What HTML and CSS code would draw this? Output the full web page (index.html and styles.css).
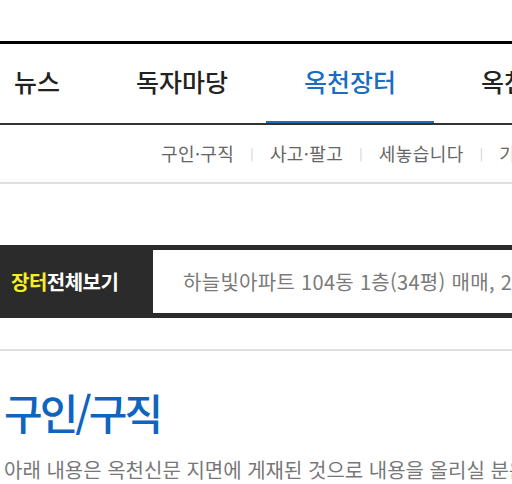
FILE: index.html
```html
<!DOCTYPE html>
<html lang="ko">
  <head>
    <meta charset="UTF-8" />
    <meta name="viewport" content="width=device-width, initial-scale=1.0" />
    <title>옥천장터 - 구인/구직</title>
    <link rel="stylesheet" href="styles.css">
  </head>
  <body>
    <div class="top-space"></div>
    <nav class="gnb">
      <ul class="gnb-list">
        <li class="gnb-item">뉴스</li>
        <li class="gnb-item">독자마당</li>
        <li class="gnb-item active">옥천장터</li>
        <li class="gnb-item">옥천사람</li>
      </ul>
    </nav>
    <div class="sub-menu">
      <a class="sub-link">구인·구직</a>
      <span class="sub-sep">|</span>
      <a class="sub-link">사고·팔고</a>
      <span class="sub-sep">|</span>
      <a class="sub-link">세놓습니다</a>
      <span class="sub-sep">|</span>
      <a class="sub-link">기타</a>
    </div>

    <div class="market-bar">
      <div class="market-label"><em>장터</em>전체보기</div>
      <div class="market-ticker">하늘빛아파트 104동 1층(34평) 매매, 200세대 신축 아파트</div>
    </div>

    <div class="content">
      <h2 class="page-title">구인/구직</h2>
      <p class="page-desc">아래 내용은 옥천신문 지면에 게재된 것으로 내용을 올리실 분은 신문사로 연락주세요.</p>
    </div>
  </body>
</html>
```

FILE: styles.css
```css
* {
  padding: 0;
  margin: 0;
  box-sizing: border-box;
}

body {
  font-family: "Noto Sans CJK KR", "Noto Sans", sans-serif;
  background-color: #fff;
  color: #222;
  overflow: hidden;
}

/*HEADER*/
.top-space {
  height: 41px;
}

.gnb {
  border-top: 3px solid #000;
  border-bottom: 2px solid #333;
  overflow: hidden;
  white-space: nowrap;
}

.gnb-list {
  display: flex;
  list-style: none;
  margin-left: -24px;
}

.gnb-item {
  flex: none;
  padding: 0 38px;
  height: 79px;
  line-height: 74px;
  font-size: 25px;
  font-weight: 500;
  color: #222;
}

.gnb-item.active {
  color: #1a6dc2;
  height: 81px;
  margin-bottom: -2px;
  border-bottom: 4px solid #1a6dc2;
}

.gnb-item.active + .gnb-item {
  padding-left: 47px;
}

.sub-menu {
  display: flex;
  align-items: center;
  height: 59px;
  padding-left: 161px;
  padding-bottom: 2px;
  border-bottom: 2px solid #e0e0e0;
  white-space: nowrap;
  overflow: hidden;
  font-size: 18px;
  letter-spacing: 0.4px;
  color: #666;
}

.sub-link {
  flex: none;
}

.sub-sep {
  flex: none;
  margin: 0 16px;
  font-size: 12px;
  color: #ccc;
}

/*MARKET BAR*/
.market-bar {
  display: flex;
  margin-top: 61px;
  height: 73px;
  padding: 5px 0 5px 0;
  background-color: #2b2b2b;
}

.market-label {
  flex: none;
  width: 153px;
  padding-left: 11px;
  display: flex;
  align-items: center;
  font-size: 20px;
  font-weight: 700;
  letter-spacing: -0.5px;
  color: #fff;
}

.market-label em {
  font-style: normal;
  color: #f5f01e;
}

.market-ticker {
  flex: 1;
  min-width: 0;
  display: flex;
  align-items: center;
  padding-left: 30px;
  background-color: #fff;
  white-space: nowrap;
  overflow: hidden;
  font-size: 20px;
  letter-spacing: 0.3px;
  color: #7a7a7a;
}

/*CONTENT*/
.content {
  margin-top: 31px;
  border-top: 2px solid #e0e0e0;
  padding-left: 4px;
  white-space: nowrap;
  overflow: hidden;
}

.page-title {
  margin-top: 33px;
  font-size: 42px;
  line-height: 56px;
  font-weight: 500;
  letter-spacing: -3px;
  color: #0f64c0;
}

.page-desc {
  margin-top: 15px;
  font-size: 20px;
  color: #777;
}
```
